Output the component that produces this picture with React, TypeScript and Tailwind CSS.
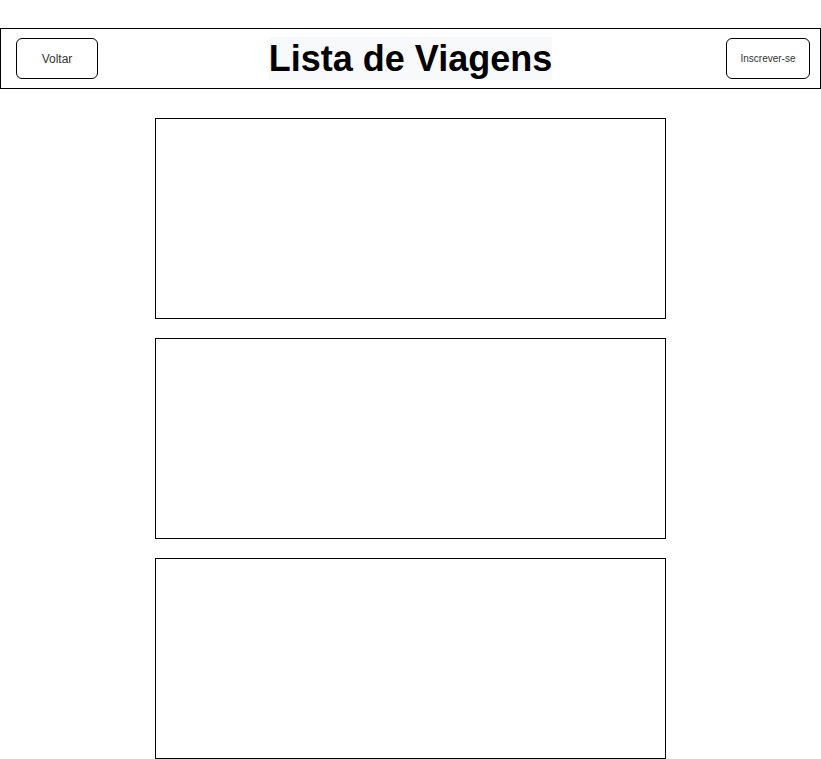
export default function App() {
  return (
    <div className="min-h-screen bg-white font-['Liberation_Sans',Arial,sans-serif] text-black">
      {/* Header */}
      <header className="mt-[28px] grid h-[61px] grid-cols-[1fr_auto_1fr] items-center border border-black px-[10px]">
        <button className="ml-[5px] h-[41px] w-[82px] justify-self-start rounded-[6px] border border-black text-[12px] text-[#333]">
          Voltar
        </button>
        <h1 className="bg-[#f8f9fa] text-[36px] font-bold leading-[43px]">Lista de Viagens</h1>
        <button className="h-[41px] w-[84px] justify-self-end rounded-[6px] border border-black text-[10px] text-[#333]">
          Inscrever-se
        </button>
      </header>

      {/* Trip cards */}
      <main className="mt-[29px] flex flex-col items-center gap-[19px]">
        <div className="h-[201px] w-[511px] border border-black" />
        <div className="h-[201px] w-[511px] border border-black" />
        <div className="h-[201px] w-[511px] border border-black" />
      </main>
    </div>
  );
}
